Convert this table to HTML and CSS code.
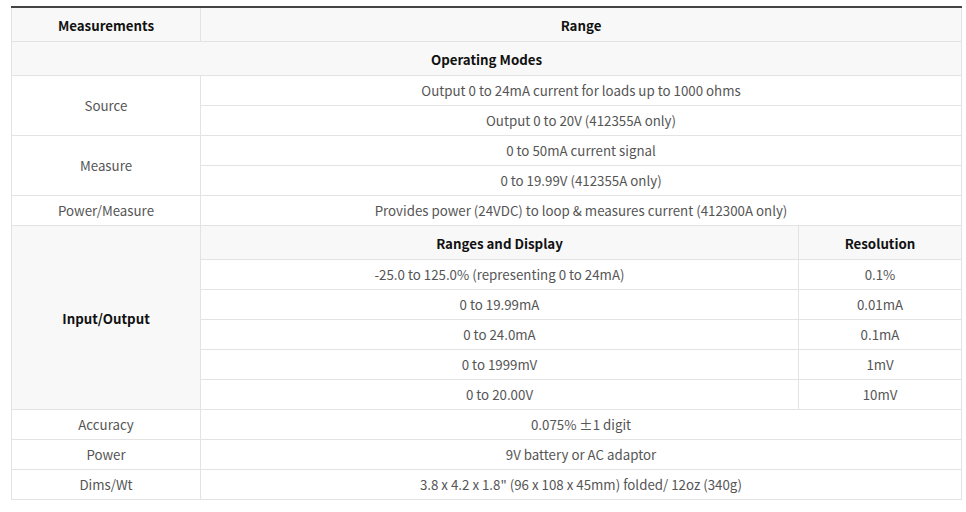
FILE: index.html
```html
<!DOCTYPE html>
<html>
<head>
<meta charset="utf-8">
<link rel="stylesheet" href="styles.css">
</head>
<body>
<div class="wrap">
<table class="spec">
  <colgroup>
    <col class="c1"><col class="c2"><col class="c3">
  </colgroup>
  <tr class="head">
    <th>Measurements</th>
    <th colspan="2">Range</th>
  </tr>
  <tr class="head section">
    <th colspan="3">Operating Modes</th>
  </tr>
  <tr><td rowspan="2">Source</td><td colspan="2">Output 0 to 24mA current for loads up to 1000 ohms</td></tr>
  <tr><td colspan="2">Output 0 to 20V (412355A only)</td></tr>
  <tr><td rowspan="2">Measure</td><td colspan="2">0 to 50mA current signal</td></tr>
  <tr><td colspan="2">0 to 19.99V (412355A only)</td></tr>
  <tr><td>Power/Measure</td><td colspan="2">Provides power (24VDC) to loop &amp; measures current (412300A only)</td></tr>
  <tr class="head sub">
    <th rowspan="6" class="io">Input/Output</th>
    <th>Ranges and Display</th>
    <th>Resolution</th>
  </tr>
  <tr><td>-25.0 to 125.0% (representing 0 to 24mA)</td><td>0.1%</td></tr>
  <tr><td>0 to 19.99mA</td><td>0.01mA</td></tr>
  <tr><td>0 to 24.0mA</td><td>0.1mA</td></tr>
  <tr><td>0 to 1999mV</td><td>1mV</td></tr>
  <tr><td>0 to 20.00V</td><td>10mV</td></tr>
  <tr><td>Accuracy</td><td colspan="2">0.075% ±1 digit</td></tr>
  <tr><td>Power</td><td colspan="2">9V battery or AC adaptor</td></tr>
  <tr><td>Dims/Wt</td><td colspan="2">3.8 x 4.2 x 1.8" (96 x 108 x 45mm) folded/ 12oz (340g)</td></tr>
</table>
</div>
</body>
</html>
```

FILE: styles.css
```css
html, body {
  margin: 0;
  padding: 0;
  background: #fff;
}
.wrap {
  padding: 6px 5px 0 11px;
}
.spec {
  width: 950px;
  table-layout: fixed;
  border-collapse: collapse;
  font-family: "Noto Sans CJK SC", "Noto Sans", sans-serif;
  font-size: 13.3px;
  color: #555;
  border-top: 2px solid #444;
}
.c1 { width: 189px; }
.c2 { width: 598px; }
.c3 { width: 163px; }
.spec th, .spec td {
  border: 1px solid #e3e3e3;
  text-align: center;
  vertical-align: middle;
  padding: 2px 8px 0;
  line-height: 20px;
  box-sizing: border-box;
}
.spec td {
  height: 30px;
}
.spec th {
  color: #111;
  font-weight: bold;
  background: #f8f8f8;
  padding-top: 3px;
}
.spec tr.head:first-child th {
  height: 34px;
  border-top: 2px solid #444;
}
.spec tr.section th {
  height: 34px;
}
.spec tr.sub th {
  height: 34px;
}
.spec th.io {
  height: auto;
}
```
